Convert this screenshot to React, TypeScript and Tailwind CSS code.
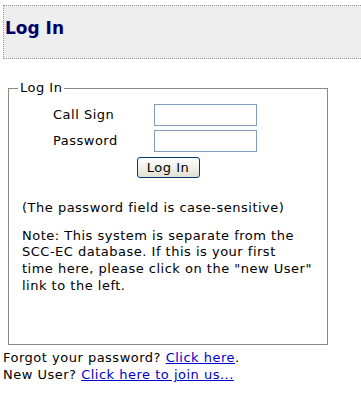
import React from 'react'

const font = { fontFamily: '"DejaVu Sans", Verdana, sans-serif' }

export default function App() {
  return (
    <div className="w-[361px] h-[399px] overflow-hidden bg-white text-black text-[13px] tracking-[0.5px]" style={font}>
      {/* Page title */}
      <div className="mt-[5px] ml-[3px] h-[54px] border-y border-l border-dotted border-[#999999] bg-[#eeeeee] pl-[1px] pt-3">
        <h1 className="text-[17px] leading-[20px] font-bold tracking-normal text-[#000066]">Log In</h1>
      </div>

      {/* Login box */}
      <fieldset className="mt-[21px] ml-2 w-[320px] h-[265px] border border-[#8a8a80]">
        <legend className="ml-[9px] px-[2px] leading-[16px]">Log In</legend>

        <div className="pt-2 pl-[44px]">
          <div className="flex items-center h-[22px]">
            <label className="w-[101px]">Call Sign</label>
            <input type="text" className="w-[103px] h-[22px] border border-[#7f9db9] bg-white" />
          </div>
          <div className="flex items-center h-[22px] mt-1">
            <label className="w-[101px]">Password</label>
            <input type="password" className="w-[103px] h-[22px] border border-[#7f9db9] bg-white" />
          </div>
        </div>

        <div className="flex justify-center mt-[5px]">
          <button className="w-[63px] h-[21px] rounded-[3px] border border-[#003c74] bg-gradient-to-b from-white to-[#e3e0d2] text-[13px] leading-none tracking-[0.5px]">
            Log In
          </button>
        </div>

        <p className="mt-[22px] pl-[13px] leading-[16.67px] whitespace-nowrap">(The password field is case-sensitive)</p>
        <p className="mt-[11px] pl-[13px] leading-[16.67px] whitespace-nowrap">
          Note: This system is separate from the<br />
          SCC-EC database. If this is your first<br />
          time here, please click on the "new User"<br />
          link to the left.
        </p>
      </fieldset>

      <div className="mt-1 pl-[3px] leading-[17px]">
        <div>
          Forgot your password? <a href="#" className="text-[#0000cc] underline">Click here</a>.
        </div>
        <div>
          New User? <a href="#" className="text-[#0000cc] underline">Click here to join us...</a>
        </div>
      </div>
    </div>
  )
}
